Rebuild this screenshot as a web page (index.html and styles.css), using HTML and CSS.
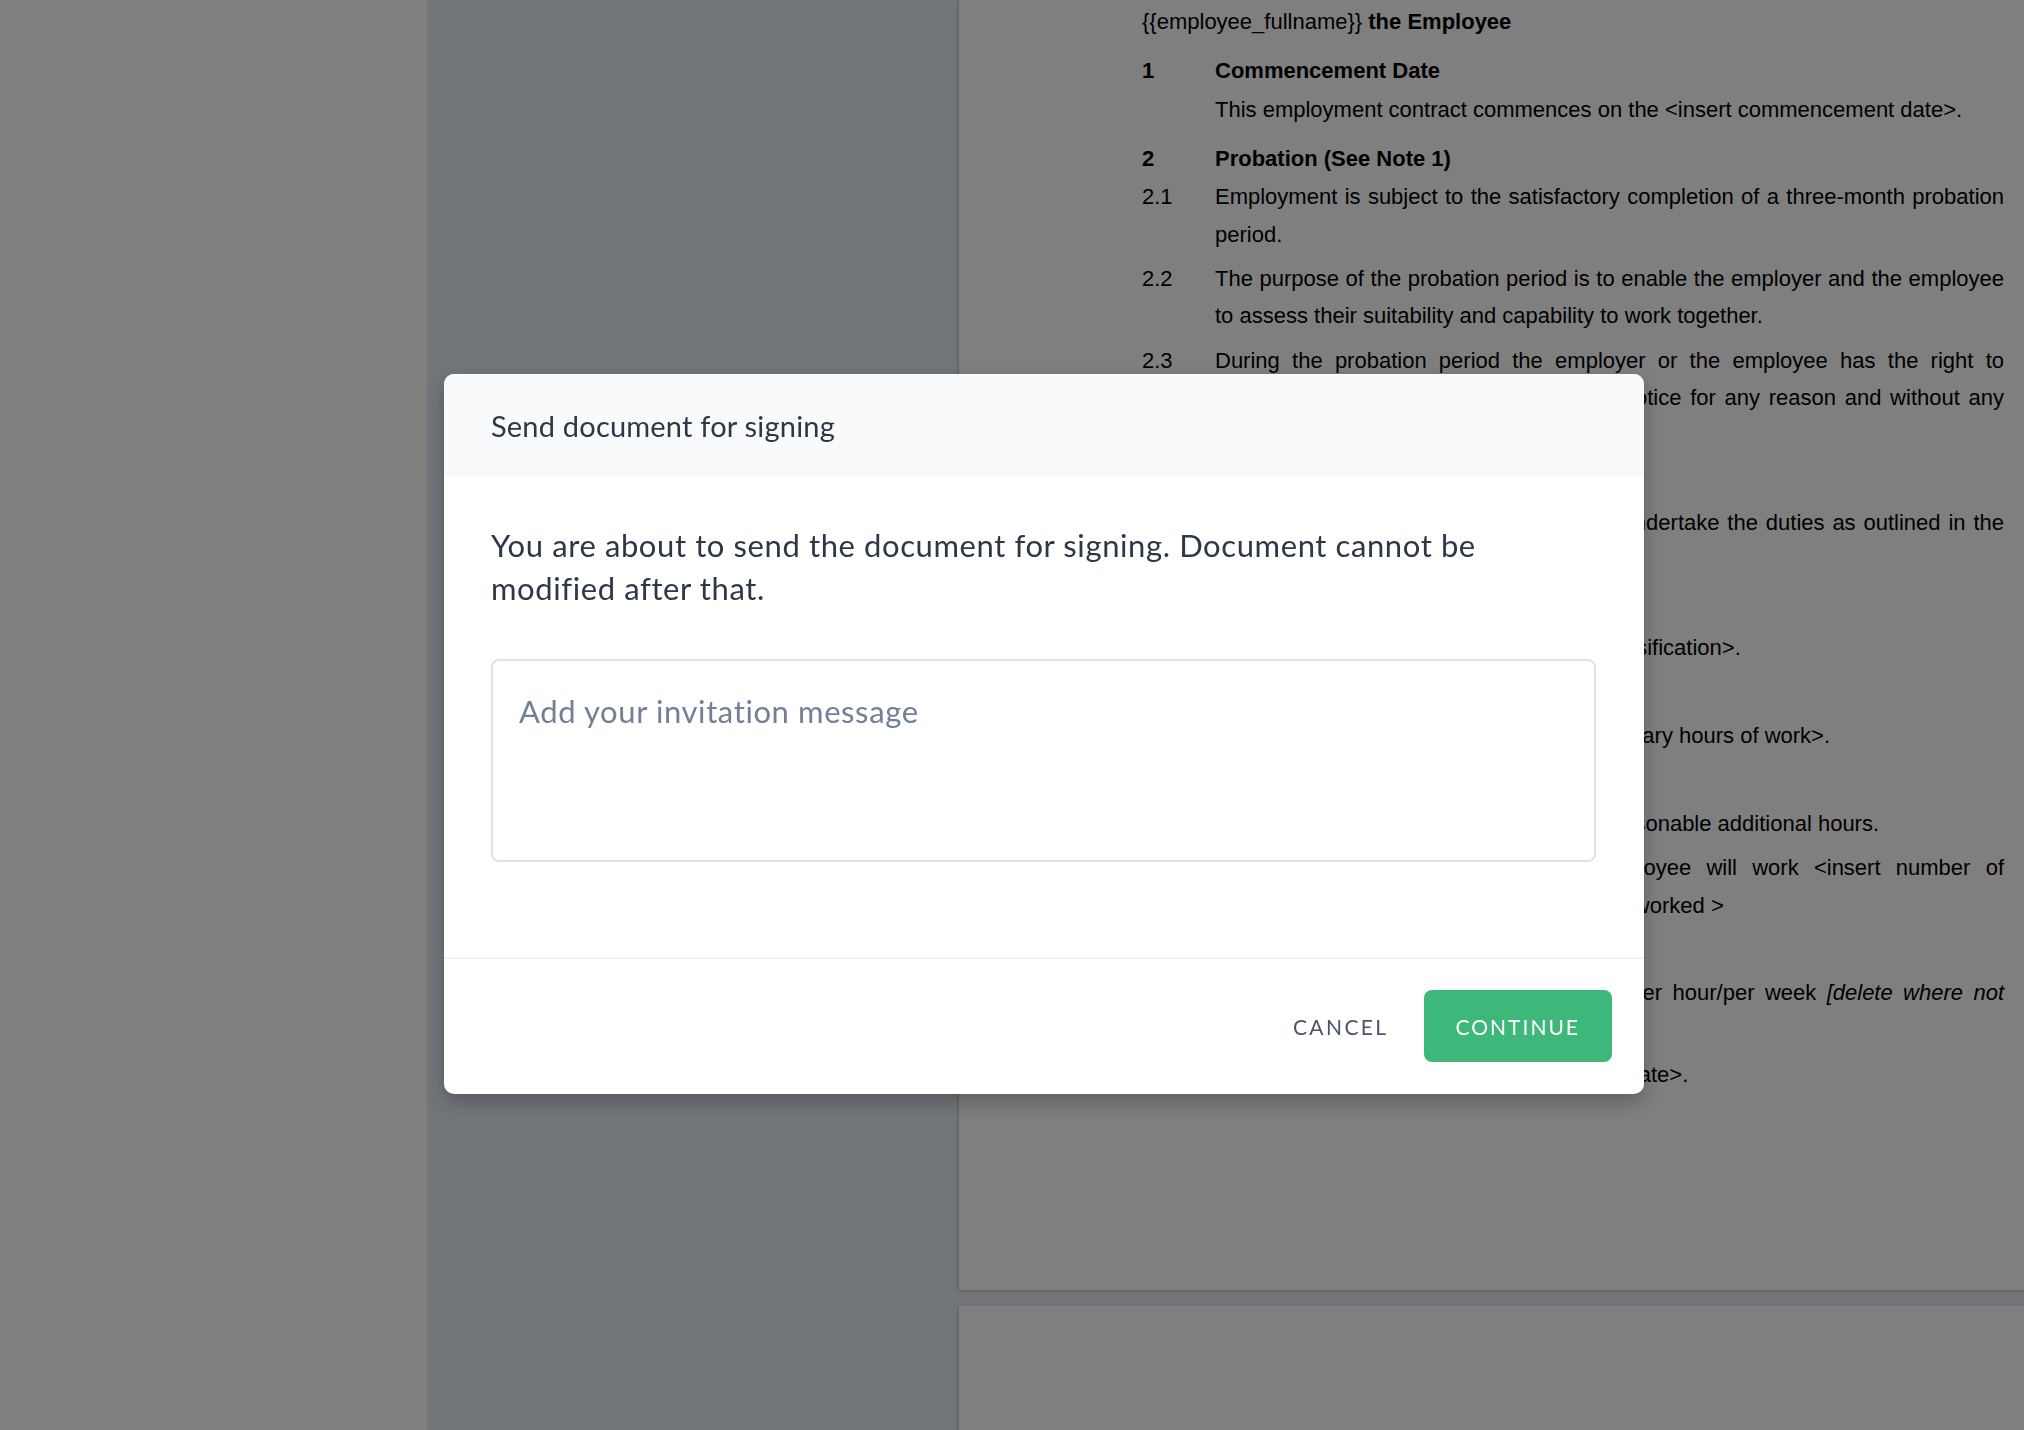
FILE: index.html
```html
<!DOCTYPE html>
<html lang="en">
<head>
<meta charset="utf-8">
<title>Send document for signing</title>
<link rel="stylesheet" href="styles.css">
</head>
<body>
<div class="app">
  <aside class="sidebar"></aside>
  <main class="viewer">
    <section class="page page-first">
      <p class="doc-line intro">{{employee_fullname}} <b>the Employee</b></p>

      <div class="row sec"><span class="num">1</span><span class="txt">Commencement Date</span></div>
      <div class="row body"><span class="num"></span><span class="txt">This employment contract commences on the &lt;insert commencement date&gt;.</span></div>

      <div class="row sec"><span class="num">2</span><span class="txt">Probation (See Note 1)</span></div>
      <div class="row item first"><span class="num">2.1</span><span class="txt">Employment is subject to the satisfactory completion of a three-month probation period.</span></div>
      <div class="row item"><span class="num">2.2</span><span class="txt">The purpose of the probation period is to enable the employer and the employee to assess their suitability and capability to work together.</span></div>
      <div class="row item"><span class="num">2.3</span><span class="txt">During the probation period the employer or the employee has the right to terminate their contract with one week&rsquo;s notice for any reason and without any penalty.</span></div>

      <div class="row sec"><span class="num">3</span><span class="txt">Duties</span></div>
      <div class="row body"><span class="num"></span><span class="txt">The employee is hired as &lt;job&gt; and will undertake the duties as outlined in the attached position description.</span></div>

      <div class="row sec"><span class="num">4</span><span class="txt">Classification</span></div>
      <div class="row body"><span class="num"></span><span class="txt">This post is classified as &lt;insert award classification&gt;.</span></div>

      <div class="row sec"><span class="num">5</span><span class="txt">Hours of Work</span></div>
      <div class="row item first"><span class="num">5.1</span><span class="txt">The ordinary hours of work are &lt;insert ordinary hours of work&gt;.</span></div>
      <div class="row item"><span class="num">5.2</span><span class="txt">Hours will be worked on &lt;insert days&gt;.</span></div>
      <div class="row item"><span class="num">5.3</span><span class="txt">The employee may be required to work reasonable additional hours.</span></div>
      <div class="row item"><span class="num">5.4</span><span class="txt">Where part-time work applies, the employee will work &lt;insert number of hours/week&gt; hours per week in days to be worked &gt;</span></div>

      <div class="row sec"><span class="num">6</span><span class="txt">Remuneration</span></div>
      <div class="row item first"><span class="num">6.1</span><span class="txt">The employee&rsquo;s pay is &lt;insert amount&gt; per hour/per week <i>[delete where not applicable]</i>.</span></div>
      <div class="row item"><span class="num">6.2</span><span class="txt">Pay will be reviewed each year on &lt;insert date&gt;.</span></div>
    </section>
    <section class="page page-second"></section>
  </main>
</div>

<div class="overlay">
  <div class="modal" role="dialog" aria-labelledby="modal-title">
    <header class="modal-header">
      <h2 class="modal-title" id="modal-title">Send document for signing</h2>
    </header>
    <div class="modal-body">
      <p class="modal-text">You are about to send the document for signing. Document cannot be modified after that.</p>
      <textarea class="invite" placeholder="Add your invitation message"></textarea>
    </div>
    <footer class="modal-footer">
      <button class="btn btn-cancel" type="button">CANCEL</button>
      <button class="btn btn-continue" type="button">CONTINUE</button>
    </footer>
  </div>
</div>
</body>
</html>
```

FILE: styles.css
```css
* { box-sizing: border-box; }

html, body {
  margin: 0;
  width: 2024px;
  height: 1430px;
  overflow: hidden;
}

body {
  font-family: "Liberation Sans", Arial, sans-serif;
}

.app {
  display: flex;
  height: 1430px;
}

.sidebar {
  flex: 0 0 427px;
  background: #ffffff;
}

.viewer {
  flex: 1 1 auto;
  background: #e5ecf4;
  padding-left: 532px;
  overflow: hidden;
}

.page {
  width: 1228px;
  background: #ffffff;
  box-shadow: -1px 1px 3px rgba(0, 0, 0, 0.22);
  padding: 3px 183px 0 183px;
  color: #000;
  font-size: 22px;
  line-height: 37.5px;
}

.page-first {
  height: 1290px;
  margin-bottom: 16px;
}

.page-second {
  height: 400px;
}

.doc-line {
  margin: 0;
}

.row {
  display: grid;
  grid-template-columns: 73px 1fr;
}

.row .txt {
  text-align: justify;
}

.sec {
  margin-top: 11.5px;
  font-weight: bold;
}

.body {
  margin-top: 1px;
}

.item {
  margin-top: 6.8px;
}

.item.first {
  margin-top: 1px;
}

/* Modal */
.overlay {
  position: fixed;
  inset: 0;
  background: rgba(0, 0, 0, 0.5);
  display: flex;
  justify-content: center;
  align-items: flex-start;
  padding: 374px 0 0 64px;
}

.modal {
  width: 1200px;
  background: #ffffff;
  border-radius: 10px;
  overflow: hidden;
  box-shadow: 0 8px 20px rgba(0, 0, 0, 0.25);
  font-family: Lato, "Open Sans", sans-serif;
}

.modal-header {
  height: 102px;
  background: #f8fafc;
  display: flex;
  align-items: center;
  padding: 0 47px;
}

.modal-title {
  margin: 0;
  font-size: 29px;
  letter-spacing: 0.2px;
  font-weight: 400;
  color: #2d3748;
}

.modal-body {
  padding: 48px 48px 95px 47px;
}

.modal-text {
  margin: 0 0 50px;
  max-width: 1060px;
  font-size: 31px;
  letter-spacing: 0.6px;
  line-height: 42.6px;
  color: #2d3748;
}

.invite {
  display: block;
  width: 100%;
  height: 203px;
  border: 2px solid #dce3ec;
  border-radius: 8px;
  padding: 29px 26px;
  font-family: Lato, "Open Sans", sans-serif;
  font-size: 31px;
  letter-spacing: 0.6px;
  line-height: 42.6px;
  color: #2d3748;
  resize: none;
  outline: none;
}

.invite::placeholder {
  color: #718096;
}

.modal-footer {
  border-top: 2px solid #f1f3f5;
  padding: 31px 32px 32px;
  display: flex;
  justify-content: flex-end;
  align-items: center;
  gap: 11px;
}

.btn {
  height: 72px;
  border: 0;
  font-family: Lato, "Open Sans", sans-serif;
  font-size: 21px;
  letter-spacing: 2px;
  cursor: pointer;
}

.btn-cancel {
  background: transparent;
  color: #4a5568;
  padding: 0 24px;
  letter-spacing: 2.4px;
}

.btn-continue {
  background: #3db87a;
  color: #ffffff;
  border-radius: 8px;
  padding: 0 32px;
}
```
